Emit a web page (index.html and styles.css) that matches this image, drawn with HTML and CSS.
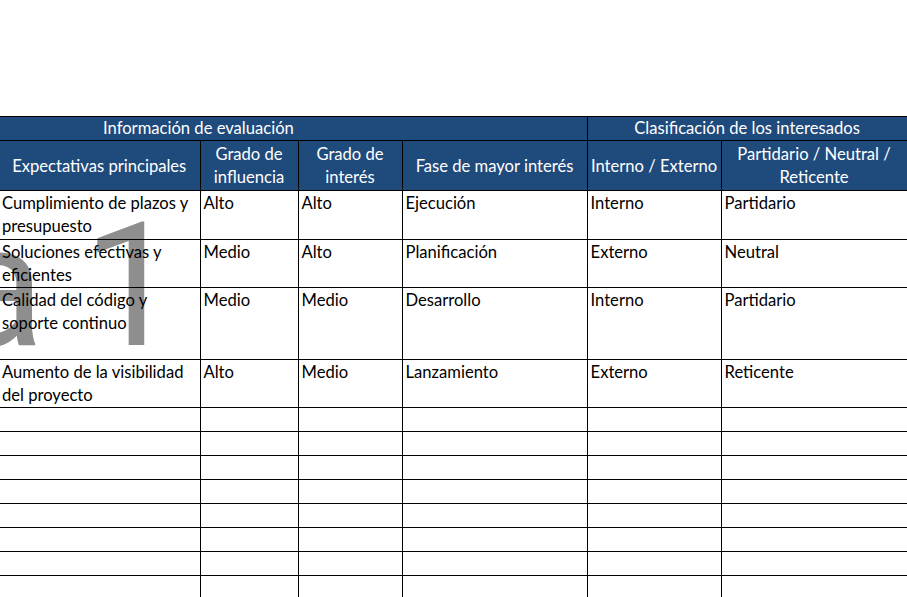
FILE: index.html
```html
<!DOCTYPE html>
<html lang="es">
<head>
<meta charset="utf-8">
<title>Análisis de interesados</title>
<link rel="stylesheet" href="styles.css">
</head>
<body>
<div class="sheet">
  <div class="watermark" aria-hidden="true"><span class="wm-a">a</span><span class="wm-1">1</span></div>
  <table class="grid">
    <colgroup>
      <col class="c1"><col class="c2"><col class="c3"><col class="c4"><col class="c5"><col class="c6">
    </colgroup>
    <thead>
      <tr class="h1">
        <th colspan="4" class="group-left">Información de evaluación</th>
        <th colspan="2">Clasificación de los interesados</th>
      </tr>
      <tr class="h2">
        <th class="first">Expectativas principales</th>
        <th>Grado de<br>influencia</th>
        <th>Grado de<br>interés</th>
        <th>Fase de mayor interés</th>
        <th>Interno / Externo</th>
        <th>Partidario / Neutral /<br>Reticente</th>
      </tr>
    </thead>
    <tbody>
      <tr class="r49">
        <td class="first">Cumplimiento de plazos y<br>presupuesto</td>
        <td>Alto</td><td>Alto</td><td>Ejecución</td><td>Interno</td><td>Partidario</td>
      </tr>
      <tr class="r48">
        <td class="first">Soluciones efectivas y<br>eficientes</td>
        <td>Medio</td><td>Alto</td><td>Planificación</td><td>Externo</td><td>Neutral</td>
      </tr>
      <tr class="r72">
        <td class="first">Calidad del código y<br>soporte continuo</td>
        <td>Medio</td><td>Medio</td><td>Desarrollo</td><td>Interno</td><td>Partidario</td>
      </tr>
      <tr class="r48">
        <td class="first">Aumento de la visibilidad<br>del proyecto</td>
        <td>Alto</td><td>Medio</td><td>Lanzamiento</td><td>Externo</td><td>Reticente</td>
      </tr>
      <tr class="r24"><td class="first"></td><td></td><td></td><td></td><td></td><td></td></tr>
      <tr class="r24"><td class="first"></td><td></td><td></td><td></td><td></td><td></td></tr>
      <tr class="r24"><td class="first"></td><td></td><td></td><td></td><td></td><td></td></tr>
      <tr class="r24"><td class="first"></td><td></td><td></td><td></td><td></td><td></td></tr>
      <tr class="r24"><td class="first"></td><td></td><td></td><td></td><td></td><td></td></tr>
      <tr class="r24"><td class="first"></td><td></td><td></td><td></td><td></td><td></td></tr>
      <tr class="r24"><td class="first"></td><td></td><td></td><td></td><td></td><td></td></tr>
      <tr class="r24"><td class="first"></td><td></td><td></td><td></td><td></td><td></td></tr>
    </tbody>
  </table>
</div>
</body>
</html>
```
FILE: styles.css
```css
html, body {
  margin: 0;
  padding: 0;
  background: #ffffff;
  overflow: hidden;
}

.sheet {
  position: relative;
  width: 907px;
  height: 597px;
  padding-top: 116px;
  box-sizing: border-box;
  font-family: Lato, "Open Sans", sans-serif;
  font-size: 16.6px;
  color: #000000;
}

.watermark {
  position: absolute;
  left: 0;
  top: 0;
  width: 200px;
  height: 597px;
  z-index: 0;
  font-family: Roboto, "Liberation Sans", sans-serif;
  font-size: 172px;
  line-height: 1;
  color: #8e8e8e;
  overflow: hidden;
}

.wm-a {
  position: absolute;
  left: -49px;
  top: 200px;
}

.wm-1 {
  position: absolute;
  left: 83px;
  top: 200px;
}

.grid {
  position: relative;
  z-index: 1;
  border-collapse: collapse;
  table-layout: fixed;
  width: 907px;
}

.c1 { width: 200px; }
.c2 { width: 98px; }
.c3 { width: 104px; }
.c4 { width: 185px; }
.c5 { width: 134px; }
.c6 { width: 186px; }

.grid th,
.grid td {
  border: 1px solid #000000;
  padding: 0 3px;
  line-height: 23px;
  white-space: nowrap;
}

.grid th {
  background: #1f4a7c;
  color: #ffffff;
  font-weight: normal;
  text-align: center;
  vertical-align: middle;
}

.grid .h2 th {
  padding-top: 1px;
}

.grid td {
  padding-top: 1px;
  text-align: left;
  vertical-align: top;
  background: transparent;
}

.grid .first {
  border-left: none;
  padding-left: 2px;
}

.grid .group-left {
  border-left: none;
  text-align: left;
  padding-left: 103px;
}

.h1 { height: 24px; }
.h2 { height: 50px; }

.r24 { height: 24px; }
.r48 { height: 48px; }
.r49 { height: 49px; }
.r72 { height: 72px; }
```
